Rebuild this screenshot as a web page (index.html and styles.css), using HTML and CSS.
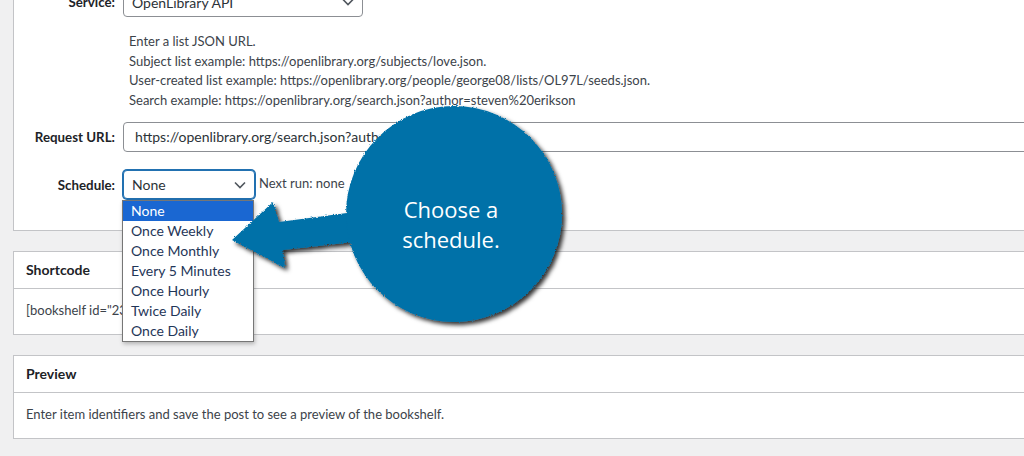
FILE: index.html
```html
<!DOCTYPE html>
<html lang="en">
<head>
    <meta charset="UTF-8">
    <title>Bookshelf settings</title>
    <link rel="stylesheet" href="styles.css">
</head>
<body>
    <div class="page">
        <!-- Settings box -->
        <div class="postbox settings">
            <div class="field">
                <label class="field-label">Service:</label>
                <div class="select select-service">
                    <span>OpenLibrary API</span>
                    <svg class="chevron" width="12" height="8" viewBox="0 0 12 8"><path d="M1 1.5 L6 6.5 L11 1.5" fill="none" stroke="#50575e" stroke-width="1.6"/></svg>
                </div>
            </div>
            <p class="desc">
                Enter a list JSON URL.<br>
                Subject list example: https://openlibrary.org/subjects/love.json.<br>
                User-created list example: https://openlibrary.org/people/george08/lists/OL97L/seeds.json.<br>
                Search example: https://openlibrary.org/search.json?author=steven%20erikson
            </p>
            <div class="field field-url">
                <label class="field-label">Request URL:</label>
                <div class="input">https://openlibrary.org/search.json?author=steven%20erikson</div>
            </div>
            <div class="field field-schedule">
                <label class="field-label">Schedule:</label>
                <div class="select select-schedule">
                    <span>None</span>
                    <svg class="chevron" width="12" height="8" viewBox="0 0 12 8"><path d="M1 1.5 L6 6.5 L11 1.5" fill="none" stroke="#50575e" stroke-width="1.6"/></svg>
                </div>
                <span class="next-run">Next run: none</span>
            </div>
        </div>

        <!-- Shortcode box -->
        <div class="postbox">
            <h2 class="postbox-header">Shortcode</h2>
            <div class="postbox-body">[bookshelf id="2345"]</div>
        </div>

        <!-- Preview box -->
        <div class="postbox">
            <h2 class="postbox-header">Preview</h2>
            <div class="postbox-body">Enter item identifiers and save the post to see a preview of the bookshelf.</div>
        </div>
    </div>

    <!-- Open schedule list -->
    <ul class="dropdown">
        <li class="selected">None</li>
        <li>Once Weekly</li>
        <li>Once Monthly</li>
        <li>Every 5 Minutes</li>
        <li>Once Hourly</li>
        <li>Twice Daily</li>
        <li>Once Daily</li>
    </ul>

    <!-- Callout -->
    <svg class="callout" width="1024" height="456" viewBox="0 0 1024 456">
        <defs>
            <filter id="rough" x="-10%" y="-10%" width="130%" height="130%">
                <feTurbulence type="fractalNoise" baseFrequency="0.9" numOctaves="2" seed="3" result="noise"/>
                <feDisplacementMap in="SourceGraphic" in2="noise" scale="3" xChannelSelector="R" yChannelSelector="G" result="rough"/>
                <feDropShadow in="rough" dx="3" dy="3" stdDeviation="2" flood-color="#000" flood-opacity="0.8"/>
            </filter>
        </defs>
        <g filter="url(#rough)" fill="#0171a8">
            <polygon points="232,240 273,202 279,222 362,211 362,241 283,250 285,268"/>
            <circle cx="454" cy="214" r="108"/>
        </g>
        <text class="callout-text" x="451" y="218">Choose a</text>
        <text class="callout-text" x="451" y="248">schedule.</text>
    </svg>
</body>
</html>
```

FILE: styles.css
```css
/* Reset */
* {
    margin: 0;
    padding: 0;
    box-sizing: border-box;
}

body {
    font-family: Lato, "Liberation Sans", sans-serif;
    font-size: 13px;
    color: #3c434a;
    background-color: #f0f0f1;
    width: 1024px;
    height: 456px;
    overflow: hidden;
    position: relative;
}

/* Boxes */
.page {
    width: 1060px;
    margin-top: -30px;
    padding-left: 13px;
    display: flex;
    flex-direction: column;
    gap: 20px;
}

.postbox {
    background: #fff;
    border: 1px solid #c3c4c7;
}

.postbox-header {
    font-size: 14px;
    font-weight: 700;
    color: #1d2327;
    height: 37px;
    line-height: 36px;
    padding: 0 12px;
    border-bottom: 1px solid #c3c4c7;
}

.postbox-body {
    height: 45px;
    padding: 11px 12px 0;
    line-height: 20px;
}

/* Settings form */
.settings {
    padding: 16px 0 31px;
}

.field {
    display: flex;
    align-items: center;
}

.field-label {
    width: 101px;
    margin-right: 8px;
    text-align: right;
    font-size: 13.3px;
    font-weight: 700;
    color: #1d2327;
}

.select {
    height: 30px;
    border: 1px solid #8c8f94;
    border-radius: 4px;
    background: #fff;
    padding: 0 8px;
    display: flex;
    align-items: center;
    justify-content: space-between;
    font-size: 14px;
    color: #2c3338;
}

.select-service {
    width: 240px;
}

.select-schedule {
    width: 132px;
    height: 29px;
    border-color: #2271b1;
    box-shadow: 0 0 0 1px #2271b1;
    margin-right: 4px;
}

.desc {
    margin: 15px 0 0 115px;
    line-height: 19.5px;
}

.field-url {
    margin-top: 12px;
}

.input {
    flex: 1;
    height: 30px;
    line-height: 28px;
    border: 1px solid #8c8f94;
    border-radius: 4px;
    padding: 0 11px;
    font-size: 14px;
    color: #2c3338;
    white-space: nowrap;
    overflow: hidden;
}

.field-schedule {
    margin-top: 18px;
}

.next-run {
    align-self: flex-start;
    margin-top: 5px;
}

/* Dropdown list */
.dropdown {
    position: absolute;
    left: 122px;
    top: 200px;
    width: 132px;
    list-style: none;
    background: #fff;
    border: 1px solid #767676;
    box-shadow: 1px 2px 4px rgba(0, 0, 0, 0.25);
}

.dropdown li {
    height: 20px;
    line-height: 20px;
    padding-left: 8px;
    font-size: 14px;
    color: #1f3658;
}

.dropdown li.selected {
    background: #1a67d2;
    color: #fff;
}

/* Callout */
.callout {
    position: absolute;
    left: 0;
    top: 0;
    pointer-events: none;
}

.callout-text {
    font-family: "Open Sans", sans-serif;
    font-size: 22px;
    fill: #fff;
    text-anchor: middle;
}
```
